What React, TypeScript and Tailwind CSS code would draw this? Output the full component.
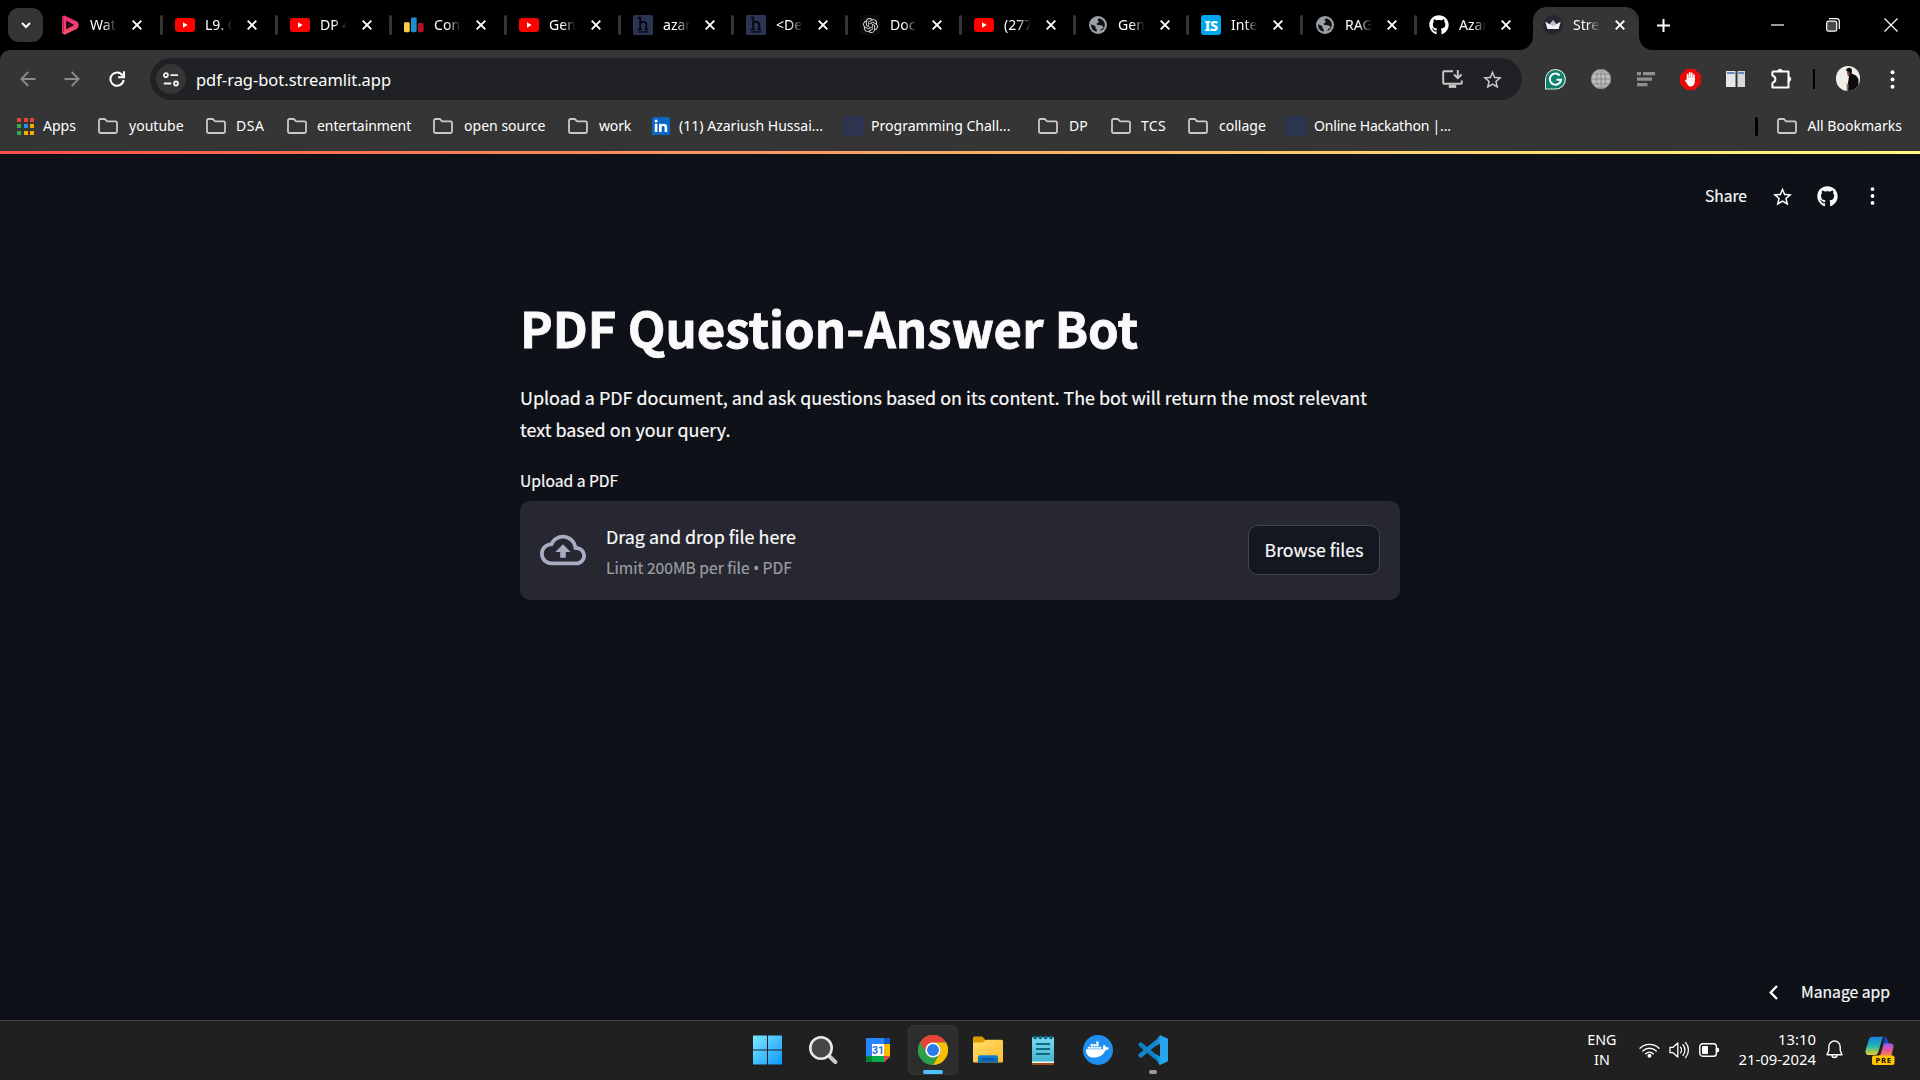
import React from "react";
import { FaGithub, FaDocker } from "react-icons/fa";
import { SiOpenai } from "react-icons/si";

/* ---------- Tab icons ---------- */

const YouTube = () => (
  <svg width="20" height="14" viewBox="0 0 20 14">
    <rect width="20" height="14" rx="3" fill="#ff0000" />
    <path d="M8 4.2v5.6L12.6 7z" fill="#fff" />
  </svg>
);

const Clipchamp = () => (
  <svg width="20" height="20" viewBox="0 0 20 20">
    <defs>
      <linearGradient id="dg" x1="0" y1="0" x2="0" y2="1">
        <stop offset="0" stopColor="#f0297c" />
        <stop offset="1" stopColor="#f9546a" />
      </linearGradient>
    </defs>
    <path d="M4 .3 16.500 6.200q2 1 2 3v1.800q0 2-2 3L4.500 19.800 2 18V2z" fill="url(#dg)" />
    <path d="M6.300 5.800 14 10 6.300 14.200z" fill="#000" />
    <path d="M8.400 8 11.800 10 8.400 12z" fill="#4a0f28" />
    <path d="M3.200 3v14.500" stroke="#a81f55" strokeWidth="1.200" />
  </svg>
);

const Bars = () => (
  <svg width="21" height="16" viewBox="0 0 21 16">
    <rect x="0" y="5" width="6" height="10.500" rx="1.400" fill="#fccf47" />
    <rect x="7.300" y="0" width="6" height="15.500" rx="1.400" fill="#1b8fd2" />
    <rect x="14.600" y="6" width="6" height="9.500" rx="1.400" fill="#b5121f" />
  </svg>
);

const HIcon = ({ dim = false }: { dim?: boolean }) => (
  <svg width="20" height="20" viewBox="0 0 20 20">
    <rect width="20" height="20" rx="1.500" fill="#2c3454" />
    <path d="M4.800 2.600h2.400v11.800M4.800 14.400h4.200M7.200 8.200c2.400-2.200 6-1.900 6 1.400v4.800M11.400 14.400h3.800" fill="none" stroke={dim ? "#323846" : "#050810"} strokeWidth="1.900" />
    <path d="M5.200 16.900h10" stroke={dim ? "#323846" : "#050810"} strokeWidth="1.200" />
  </svg>
);

const OpenAI = () => (
  <span className="flex size-5 items-center justify-center rounded bg-[#0c0c0c]">
    <SiOpenai className="size-[15px] text-[#d8d8d8]" />
  </span>
);

const Globe = () => (
  <svg width="18" height="18" viewBox="0 0 18 18">
    <circle cx="9" cy="9" r="9" fill="#9aa0a6" />
    <path d="M10.200 2.200c-1.800.8-2 2-1 2.800 1.200.8.4 1.700-.6 2-1.200.3-1.500 1.200-.4 1.700 2 .8 5.800.2 6.200 2.300.2 1.800-2.100 1.300-2.600 2.700-.3.900-.8 1.600-1.600 1.700 3-.6 5.600-3.300 5.600-6.400 0-3.300-2.300-6-5.600-6.800z" fill="#111" />
    <path d="M2.100 8.100c1.200 1.300 3.200 1 4 2.100.7 1 .1 2.100 1.200 2.800.8.500.5 1.700.3 2.700C4.300 15.300 1.800 12.300 2.100 8.100z" fill="#111" />
  </svg>
);

const InternIcon = () => (
  <span className="flex size-5 items-center justify-center rounded-[3px] bg-[#00a5ec] font-['Noto_Sans',sans-serif] text-[14.500px] leading-none font-extrabold tracking-[-0.500px] text-white">IS</span>
);

const Streamlit = () => (
  <svg width="20" height="20" viewBox="0 0 20 20">
    <circle cx="10" cy="10" r="10" fill="#262630" />
    <path d="M2.300 6.700 6.800 9.300 10 5.300 13.200 9.300 17.700 6.700 15.600 14H4.400z" fill="#f2f2f4" />
    <path d="M6.800 9.300 10 5.300 13.200 9.300 10 11.200z" fill="#b9bac2" />
  </svg>
);

const Close = () => (
  <svg width="10" height="10" viewBox="0 0 10 10">
    <path d="M.7.7l8.600 8.600M9.300.7.7 9.300" stroke="#fff" strokeWidth="1.900" />
  </svg>
);

const tabs: { icon: React.ReactNode; text: string; w: string }[] = [
  { icon: <Clipchamp />, text: "Wat", w: "w-[115px]" },
  { icon: <YouTube />, text: "L9. C", w: "w-[115px]" },
  { icon: <YouTube />, text: "DP 4", w: "w-[114px]" },
  { icon: <Bars />, text: "Con", w: "w-[115px]" },
  { icon: <YouTube />, text: "Gen", w: "w-[114px]" },
  { icon: <HIcon />, text: "azar", w: "w-[113px]" },
  { icon: <HIcon />, text: "<De", w: "w-[114px]" },
  { icon: <OpenAI />, text: "Doc", w: "w-[114px]" },
  { icon: <YouTube />, text: "(277", w: "w-[114px]" },
  { icon: <Globe />, text: "Gen", w: "w-[113px]" },
  { icon: <InternIcon />, text: "Inte", w: "w-[114px]" },
  { icon: <Globe />, text: "RAG", w: "w-[114px]" },
  { icon: <FaGithub className="size-5 text-white" />, text: "Azar", w: "w-[114px]" },
];

const TabBody = ({ icon, text }: { icon: React.ReactNode; text: string }) => (
  <>
    <span className="flex w-5 shrink-0 items-center justify-center">{icon}</span>
    <span className="ml-[10px] w-[27px] shrink-0 mask-r-from-50% mask-r-to-100% text-[14.050px] leading-5 whitespace-nowrap text-white">{text}</span>
    <span className="ml-[14.500px] flex shrink-0">
      <Close />
    </span>
  </>
);

const TabStrip = () => (
  <div className="flex h-[50px] items-center bg-black">
    <div className="ml-2 flex h-[34px] w-[35px] shrink-0 items-center justify-center rounded-[11px] bg-[#353535]">
      <svg width="10" height="7" viewBox="0 0 10 7"><path d="M1 1l4 4 4-4" fill="none" stroke="#fff" strokeWidth="2" /></svg>
    </div>
    <div className="ml-[2px] flex h-full items-center">
      {tabs.map((t, i) => (
        <div key={i} className={`flex h-full shrink-0 items-center ${t.w}`}>
          <span className={`mr-3 h-5 w-[3px] shrink-0 rounded-full ${i === 0 ? "bg-transparent" : "bg-[#353535]"}`} />
          <TabBody icon={t.icon} text={t.text} />
        </div>
      ))}
    </div>
    <div className="relative ml-[5px] flex h-[43px] w-[106px] shrink-0 items-center self-end rounded-t-[14px] bg-[#353535] pb-[7px] pl-[10px]">
      <svg className="absolute bottom-0 -left-[14px]" width="14" height="14" viewBox="0 0 14 14"><path d="M14 0v14H0A14 14 0 0 0 14 0z" fill="#353535" /></svg>
      <svg className="absolute -right-[14px] bottom-0" width="14" height="14" viewBox="0 0 14 14"><path d="M0 0v14h14A14 14 0 0 1 0 0z" fill="#353535" /></svg>
      <TabBody icon={<Streamlit />} text="Stre" />
    </div>
    <svg className="ml-[18px] shrink-0" width="13" height="13" viewBox="0 0 13 13"><path d="M6.500 0v13M0 6.500h13" stroke="#fff" strokeWidth="2" /></svg>
    <div className="ml-auto flex items-center pr-[22px] text-white">
      <svg width="13" height="13" viewBox="0 0 13 13"><path d="M0 6h13" stroke="#fff" strokeWidth="1.200" /></svg>
      <svg className="ml-[42px]" width="14" height="14" viewBox="0 0 14 14" fill="none" stroke="#fff" strokeWidth="1.200">
        <rect x=".7" y="3.200" width="10" height="10" rx="1.800" fill="#4a4a4a" />
        <path d="M3 .7h7.500A2.800 2.800 0 0 1 13.300 3.500V11" />
      </svg>
      <svg className="ml-[44px]" width="14" height="14" viewBox="0 0 14 14"><path d="M.5.5l13 13M13.500.5l-13 13" stroke="#fff" strokeWidth="1.200" /></svg>
    </div>
  </div>
);

/* ---------- Toolbar ---------- */

const ArrowLeft = ({ flip = false }: { flip?: boolean }) => (
  <svg className={flip ? "rotate-180" : ""} width="16" height="16" viewBox="0 0 16 16" fill="none" stroke="#8a8a8a" strokeWidth="1.800">
    <path d="M15.500 8H1.500M8.300 1 1.300 8l7 7" />
  </svg>
);

const Star = ({ color, w }: { color: string; w: number }) => (
  <svg width={w} height={w} viewBox="2 2 20 19" fill={color}>
    <path d="M22 9.240l-7.190-.62L12 2 9.190 8.630 2 9.240l5.460 4.730L5.820 21 12 17.270 18.180 21l-1.630-7.030L22 9.240zM12 15.400l-3.760 2.270 1-4.280-3.320-2.880 4.380-.38L12 6.100l1.710 4.040 4.380.38-3.320 2.880 1 4.280L12 15.400z" />
  </svg>
);

const Dots = ({ h = 19 }: { h?: number }) => (
  <svg width="5" height={h} viewBox="0 0 5 19" fill="#fff">
    <circle cx="2.500" cy="2.200" r="2" /><circle cx="2.500" cy="9.500" r="2" /><circle cx="2.500" cy="16.800" r="2" />
  </svg>
);

const extensions = [
  <svg key="g" width="21" height="21" viewBox="0 0 21 21">
    <path d="M0 20.500V10.500A10.500 10.200 0 1 1 10.500 20.500z" fill="#d9e5e2" />
    <path d="M1 19.500V10.300A9.400 9.300 0 1 1 10.500 19.500z" fill="#0a8168" />
    <path d="M14.700 6.500A5.600 5.600 0 1 0 16 10.800h-4.500" fill="none" stroke="#fff" strokeWidth="2" />
  </svg>,
  <svg key="w" width="20" height="20" viewBox="0 0 20 20" fill="none" stroke="#858585" strokeWidth=".9">
    <circle cx="10" cy="10" r="9.700" fill="#bdbdbd" stroke="#9a9a9a" />
    <ellipse cx="10" cy="10" rx="4.600" ry="9.500" />
    <path d="M10 .5v19M.5 10h19M2.200 5h15.600M2.200 15h15.600" />
  </svg>,
  <svg key="l" width="18" height="15" viewBox="0 0 18 15" fill="#8f8f8f">
    <path d="M0 0h4v3.200H0zM6 0h12v3.200H6zM0 5.500h15v3.200H0zM0 11h10.500v3.200H0z" />
  </svg>,
  <svg key="h" width="21" height="21" viewBox="0 0 21 21">
    <path d="M6.200 0h8.600L21 6.200v8.600L14.800 21H6.200L0 14.800V6.200z" fill="#ea0a0a" />
    <path d="M7.600 11V5.600M9.700 10V3.900M11.800 10V4.300M13.900 11V6" stroke="#fff" strokeWidth="1.700" strokeLinecap="round" />
    <path d="M6.800 9h7.900v3.800c0 2.600-1.400 4.700-3.600 4.700-2 0-3-1-3.900-2.600L5 11.400c.4-1 1.300-.9 1.800-.2z" fill="#fff" />
  </svg>,
  <svg key="c" width="19" height="16" viewBox="0 0 19 16">
    <rect width="9.500" height="16" fill="#e6e6e6" /><rect x="11.500" width="7.500" height="16" fill="#d8d8d8" />
    <rect x="1" y="1.200" width="7.500" height="1.600" fill="#4672b8" /><rect x="12.300" y="1.200" width="5.900" height="1.600" fill="#4672b8" />
  </svg>,
  <svg key="p" className="ml-[2px] -mt-[1px]" width="21" height="21" viewBox="0 0 21 21" fill="none" stroke="#fff" strokeWidth="2" strokeLinejoin="round">
    <path d="M1.200 3.500h5.600M11.200 3.500h6.300v5.200M17.500 13.300v6.100H1.400v-5M1.400 3.500v4.600" />
    <path d="M1.400 8.100c4 .2 4 6 0 6.300M6.600 3.500h5M17.500 8v6" />
    <path d="M6.600 3.500C6.800.6 11.200.6 11.400 3.500zM17.500 8.600c3 .2 3 4.700 0 4.900z" fill="#fff" strokeWidth="1" />
  </svg>,
];

const Toolbar = () => (
  <div className="bg-black">
    <div className="flex h-[58px] items-center rounded-t-[10px] bg-[#353535]">
      <span className="ml-5 flex"><ArrowLeft /></span>
      <span className="ml-[28px] flex"><ArrowLeft flip /></span>
      <svg className="ml-[29px]" width="16" height="16" viewBox="0 0 16 16" fill="none" stroke="#fff" strokeWidth="2">
        <path d="M13.600 4.600A6.600 6.600 0 1 0 14.600 9" /><path d="M15 .3v5.900H9.100" />
      </svg>
      <div className="ml-[25px] flex h-[42px] w-[1372px] items-center rounded-full bg-[#202124] pr-[20px] pl-[6px]">
        <span className="flex size-[30px] items-center justify-center rounded-full bg-[#353535]">
          <svg width="16" height="15" viewBox="0 0 16 15" fill="none" stroke="#f1f1f1" strokeWidth="1.800">
            <circle cx="2.900" cy="3.200" r="2" /><path d="M7.500 3.200H15M.8 11.500h7.500" /><circle cx="13" cy="11.500" r="2" />
          </svg>
        </span>
        <span className="mt-px ml-[10px] text-[16.450px] leading-6 text-white">pdf-rag-bot.streamlit.app</span>
        <svg className="ml-auto" width="21" height="18" viewBox="0 0 21 18" fill="none" stroke="#c7c7c7" strokeWidth="1.900">
          <path d="M11 1.200H2.200a1 1 0 0 0-1 1v10.600a1 1 0 0 0 1 1h16.600a1 1 0 0 0 1-1V10.500" />
          <path d="M15.800 0v7.500M12 4.500l3.800 3.700 3.800-3.700" /><path d="M6.800 16.400h7.400" strokeWidth="3" />
        </svg>
        <span className="ml-5 flex"><Star color="#c7c7c7" w={19} /></span>
      </div>
      <div className="ml-[11px] flex">
        {extensions.map((e, i) => (
          <span key={i} className="flex h-6 w-[45px] items-center justify-center">{e}</span>
        ))}
      </div>
      <span className="ml-[10px] h-5 w-[2px] bg-black" />
      <svg className="mt-[-2px] ml-[21px] rounded-full" width="24" height="25" viewBox="0 0 24 25">
        <rect width="24" height="25" fill="#f2efea" />
        <path d="M10 4.200C10.500 1 15.500.8 16 4.200l-.4 3.200 4.400 2L22.500 13v12H11.500l.6-8.500.8-5.500-.6-4.500z" fill="#0c0a0a" />
        <path d="M11 5.800l2.500-.2.8 3-1.900 1.500-.9-.8z" fill="#6a4238" />
        <path d="M10.700 17l2 2-.5 6h-1.500z" fill="#8a7466" />
      </svg>
      <span className="ml-[30px] flex"><Dots /></span>
    </div>
  </div>
);

/* ---------- Bookmarks ---------- */

const Folder = () => (
  <svg width="20" height="16" viewBox="0 0 20 16" fill="none" stroke="#c9c9c9" strokeWidth="1.800" strokeLinejoin="round">
    <path d="M1 2.500A1.500 1.500 0 0 1 2.500 1h4.300l2.400 2.300h8.300A1.500 1.500 0 0 1 19 4.800v8.700A1.500 1.500 0 0 1 17.500 15h-15A1.500 1.500 0 0 1 1 13.500z" />
  </svg>
);

const appColors = [
  "bg-[#ea4335]", "bg-[#ea4335]", "bg-[#ea4335]",
  "bg-[#34a853]", "bg-[#2e8cf0]", "bg-[#f9ab00]",
  "bg-[#34a853]", "bg-[#f9ab00]", "bg-[#f9ab00]",
];

const AppsGrid = () => (
  <span className="grid grid-cols-3 gap-[2.500px]">
    {appColors.map((c, i) => <span key={i} className={`size-[4px] ${c}`} />)}
  </span>
);

const LinkedIn = () => (
  <svg width="18" height="18" viewBox="0 0 18 18">
    <rect width="18" height="18" rx="1.500" fill="#0a66c2" />
    <path d="M2.800 6.800h2.600v8.300H2.800zM7 6.800h2.500V8c1.300-2.100 5.700-2 5.700 2.200v4.900h-2.600v-4.400c0-2.300-3-2.200-3 0v4.400H7z" fill="#fff" />
    <circle cx="4.100" cy="4" r="1.500" fill="#fff" />
  </svg>
);

const bookmarks: { icon: React.ReactNode; text: string; w: string; gap: string; tr?: string }[] = [
  { icon: <AppsGrid />, text: "Apps", w: "w-[81px]", gap: "ml-[9px]" },
  { icon: <Folder />, text: "youtube", w: "w-[108px]", gap: "ml-[11px]" },
  { icon: <Folder />, text: "DSA", w: "w-[81px]", gap: "ml-[10px]", tr: "tracking-[0.500px]" },
  { icon: <Folder />, text: "entertainment", w: "w-[146px]", gap: "ml-[10px]", tr: "tracking-[-0.100px]" },
  { icon: <Folder />, text: "open source", w: "w-[135px]", gap: "ml-[11px]" },
  { icon: <Folder />, text: "work", w: "w-[84px]", gap: "ml-[11px]", tr: "tracking-[-0.200px]" },
  { icon: <LinkedIn />, text: "(11) Azariush Hussai...", w: "w-[192px]", gap: "ml-[9px]" },
  { icon: <HIcon dim />, text: "Programming Chall...", w: "w-[194px]", gap: "ml-[7px]" },
  { icon: <Folder />, text: "DP", w: "w-[73px]", gap: "ml-[11px]" },
  { icon: <Folder />, text: "TCS", w: "w-[77px]", gap: "ml-[10px]", tr: "tracking-[0.300px]" },
  { icon: <Folder />, text: "collage", w: "w-[98px]", gap: "ml-[11px]" },
  { icon: <HIcon dim />, text: "Online Hackathon |...", w: "w-[180px]", gap: "ml-[8px]", tr: "tracking-[-0.210px]" },
];

const BookmarksBar = () => (
  <div className="flex h-[43px] items-start bg-[#353535] pl-[17px] text-[14.050px] text-white">
    {bookmarks.map((b, i) => (
      <div key={i} className={`flex h-9 shrink-0 items-center whitespace-nowrap ${b.w}`}>
        {b.icon}
        <span className={`leading-5 ${b.gap} ${b.tr ?? ""}`}>{b.text}</span>
      </div>
    ))}
    <div className="ml-auto flex h-9 items-center pr-[18px]">
      <span className="h-[19px] w-[3px] rounded-full bg-black" />
      <span className="ml-[19px] flex"><Folder /></span>
      <span className="ml-[10px] leading-5">All Bookmarks</span>
    </div>
  </div>
);

/* ---------- Page ---------- */

const Page = () => (
  <main className="flex h-[869px] flex-col bg-[#0e1117] font-['Noto_Sans_CJK_SC','Noto_Sans',sans-serif] text-[#fafafa] [-webkit-text-stroke:0.2px]">
    <div className="h-[3px] shrink-0 bg-gradient-to-r from-[#ff4b4b] to-[#fffd80]" />
    <header className="mt-[26px] flex h-8 shrink-0 items-center justify-end pr-[45px]">
      <span className="-mt-[2px] text-[15.600px] leading-6">Share</span>
      <span className="ml-[26px] flex"><Star color="#fafafa" w={19} /></span>
      <FaGithub className="ml-[25px] size-[21px]" />
      <span className="ml-[32px] flex"><Dots h={18} /></span>
    </header>
    <section className="mx-auto mt-[82px] w-[880px]">
      <h1 className="text-[49.100px] leading-[66px] font-bold [-webkit-text-stroke:0.8px]">PDF Question-Answer Bot</h1>
      <p className="mt-[21px] text-[17.910px] leading-8">
        Upload a PDF document, and ask questions based on its content. The bot will return the most relevant
        <br />
        text based on your query.
      </p>
      <label className="mt-[22px] block text-[15.650px] leading-7">Upload a PDF</label>
      <div className="mt-[6px] flex h-[99px] items-center rounded-[10px] bg-[#262730] px-5">
        <svg className="-mt-[2px]" width="46" height="46" viewBox="0 0 24 24" fill="#a9adc1">
          <path d="M19.350 10.040C18.670 6.590 15.640 4 12 4 9.110 4 6.600 5.640 5.350 8.040 2.340 8.360 0 10.910 0 14c0 3.310 2.690 6 6 6h13c2.760 0 5-2.240 5-5 0-2.640-2.050-4.780-4.650-4.960zM19 18H6c-2.210 0-4-1.790-4-4 0-2.050 1.530-3.760 3.560-3.970l1.070-.11.5-.95C8.080 7.140 9.940 6 12 6c2.620 0 4.880 1.860 5.390 4.430l.3 1.500 1.530.11c1.560.1 2.780 1.410 2.780 2.960 0 1.650-1.350 3-3 3zM8 13h2.550v3h2.900v-3H16l-4-4z" />
        </svg>
        <div className="mt-[2px] ml-5 flex flex-col">
          <span className="text-[17.900px] leading-8">Drag and drop file here</span>
          <span className="text-[15.620px] leading-[30px] text-[#9c9da2]">
            Limit 200MB per file <span className="font-['Noto_Sans',sans-serif]">•</span> PDF
          </span>
        </div>
        <button className="-mt-[2px] ml-auto flex h-[50px] w-[132px] items-center justify-center rounded-[10px] border border-[#41444c] bg-[#131720] pb-[2px] text-[17.700px] leading-8">Browse files</button>
      </div>
    </section>
    <footer className="mt-auto flex h-14 items-center justify-end pr-[30px]">
      <svg width="9" height="15" viewBox="0 0 9 15"><path d="M8 1 1.700 7.500 8 14" fill="none" stroke="#fff" strokeWidth="2.400" /></svg>
      <span className="ml-[23px] text-[15.700px] leading-6">Manage app</span>
    </footer>
  </main>
);

/* ---------- Taskbar ---------- */

const WindowsLogo = () => (
  <svg width="30" height="30" viewBox="0 0 30 30">
    <defs>
      <linearGradient id="win" gradientUnits="userSpaceOnUse" x1="0" y1="0" x2="30" y2="30">
        <stop offset="0" stopColor="#7feaff" /><stop offset="1" stopColor="#0a94ff" />
      </linearGradient>
    </defs>
    <path d="M0 .5h14v14H0zM15 .5h14v14H15zM0 15.500h14v14H0zM15 15.500h14v14H15z" fill="url(#win)" />
  </svg>
);

const SearchIcon = () => (
  <svg width="30" height="30" viewBox="0 0 30 30">
    <path d="M19.500 19.500 27.300 27" stroke="#c9cbd0" strokeWidth="4" strokeLinecap="round" />
    <circle cx="13" cy="13" r="10.700" fill="#454749" stroke="#e6e8ea" strokeWidth="2.600" />
  </svg>
);

const Calendar = () => (
  <svg width="24" height="24" viewBox="0 0 24 24">
    <rect width="24" height="24" rx="1.500" fill="#fff" />
    <path d="M1.500 0H18v6H6v12H0V1.500A1.500 1.500 0 0 1 1.500 0z" fill="#2684fc" />
    <path d="M18 0h4.500A1.500 1.500 0 0 1 24 1.500V6h-6z" fill="#0a5ad0" />
    <path d="M18 6h6v12h-6z" fill="#ffba00" />
    <path d="M6 18h12v6H6z" fill="#00ac47" /><path d="M0 18h6v6H1.500A1.500 1.500 0 0 1 0 22.500z" fill="#00832d" />
    <path d="M18 18h6l-6 6z" fill="#e84435" /><path d="M24 18.200V24h-5.800z" fill="#202020" />
    <text x="12" y="16" textAnchor="middle" fontSize="10.500" fontWeight="700" fontFamily="Roboto, sans-serif" fill="#2a6fe0">31</text>
  </svg>
);

const Chrome = () => (
  <svg width="30" height="30" viewBox="0 0 30 30">
    <circle cx="15" cy="15" r="15" fill="#34a853" />
    <path d="M2 7.500A15 15 0 0 1 28 7.500H15A7.500 7.500 0 0 0 8.500 18.750z" fill="#ea4335" />
    <path d="M28 7.500A15 15 0 0 1 15 30l6.500-11.250A7.500 7.500 0 0 0 15 7.500z" fill="#fbbc04" />
    <path d="M2 7.500 8.500 18.750A7.500 7.500 0 0 0 21.500 18.750L15 30A15 15 0 0 1 2 7.500z" fill="#2c9f4b" />
    <circle cx="15" cy="15" r="7.600" fill="#fff" /><circle cx="15" cy="15" r="6" fill="#2b7ce9" />
  </svg>
);

const Explorer = () => (
  <svg width="30" height="27" viewBox="0 0 30 27">
    <defs>
      <linearGradient id="fold" x1="0" y1="0" x2="1" y2="1"><stop offset="0" stopColor="#ffdc6b" /><stop offset="1" stopColor="#fdbe2c" /></linearGradient>
      <linearGradient id="fb" x1="0" y1="0" x2="0" y2="1"><stop offset="0" stopColor="#0c86da" /><stop offset="1" stopColor="#0b62b4" /></linearGradient>
    </defs>
    <path d="M0 2a1.500 1.500 0 0 1 1.500-1.500h7.800L13 4.500V8H0z" fill="#dd9b05" />
    <path d="M0 6.500h9.500L13 3.800h15.500A1.500 1.500 0 0 1 30 5.300v20.200a1 1 0 0 1-1 1H1a1 1 0 0 1-1-1z" fill="url(#fold)" />
    <path d="M5 26.500v-5.500a1.800 1.800 0 0 1 1.800-1.800h16.400A1.800 1.800 0 0 1 25 21v5.500z" fill="url(#fb)" />
    <path d="M8.500 23h13" stroke="#0a4a86" strokeWidth="1.300" />
  </svg>
);

const Notepad = () => (
  <svg width="22" height="30" viewBox="0 0 22 30">
    <defs><linearGradient id="np" x1="0" y1="0" x2="0" y2="1"><stop offset="0" stopColor="#7cdcee" /><stop offset="1" stopColor="#45b4cf" /></linearGradient></defs>
    <path d="M0 26h22v3a1 1 0 0 1-1 1H1a1 1 0 0 1-1-1z" fill="#9a4a12" />
    <path d="M0 25h22v3H0z" fill="#f0f0f0" />
    <rect y="2" width="22" height="24.500" rx="1" fill="url(#np)" />
    <g fill="#0d6a86"><circle cx="3.200" cy="2.400" r="1.900" /><circle cx="8.400" cy="2.400" r="1.900" /><circle cx="13.600" cy="2.400" r="1.900" /><circle cx="18.800" cy="2.400" r="1.900" /></g>
    <path d="M4 9h14M4 14h14M4 19h14" stroke="#0d6a86" strokeWidth="1.800" />
  </svg>
);

const Docker = () => (
  <span className="flex size-[30px] items-center justify-center rounded-full bg-[#1d90ed]">
    <FaDocker className="size-[23px] text-white" />
  </span>
);

const VSCode = () => (
  <svg width="30" height="30" viewBox="0 0 30 30">
    <path d="M2.800 9.700 22.500 26" stroke="#0f7fc4" strokeWidth="4.600" strokeLinecap="round" />
    <path d="M2.800 20.300 22.500 4" stroke="#1285cd" strokeWidth="4.600" strokeLinecap="round" />
    <path d="M22 0 30 3.700v22.600L22 30l-1.600-1.600L22 22z" fill="#27a6f0" />
    <path d="M20.300 2.200 22.300 0v8.200L18 11zM20.300 27.800l2 2.200v-8.200L18 19z" fill="#1b96df" />
  </svg>
);

const taskIcons: { icon: React.ReactNode; active?: boolean; running?: boolean }[] = [
  { icon: <WindowsLogo /> },
  { icon: <SearchIcon /> },
  { icon: <Calendar /> },
  { icon: <Chrome />, active: true },
  { icon: <Explorer /> },
  { icon: <Notepad /> },
  { icon: <Docker /> },
  { icon: <VSCode />, running: true },
];

const Copilot = () => (
  <svg width="30" height="30" viewBox="0 0 30 30">
    <defs>
      <linearGradient id="c1" x1="0" y1="0" x2="0" y2="1"><stop offset="0" stopColor="#1b7fe0" /><stop offset=".5" stopColor="#21b5b0" /><stop offset="1" stopColor="#e8d02c" /></linearGradient>
      <linearGradient id="c2" x1="0" y1="0" x2="0" y2="1"><stop offset="0" stopColor="#9a5cf5" /><stop offset=".5" stopColor="#e0559a" /><stop offset="1" stopColor="#f98a4a" /></linearGradient>
    </defs>
    <path d="M20 1c1.500 0 2.300 1.500 2.800 3.300L24 8h-6z" fill="#1749b8" />
    <path d="M7.500 0.800H20c-2 0-2.800 1.800-3.300 3.500L13.500 15.500c-.7 2.400-2 3.500-4.500 3.500H4c-3 0-4-2.300-3.200-5.300L3.600 4.200C4.300 2 5.400.8 7.500.8z" fill="url(#c1)" />
    <path d="M18.800 7.500h6.500c3 0 3.700 2.200 3 4.800l-2 7.700H13c2 0 2.600-1.700 3.100-3.300z" fill="url(#c2)" />
    <rect x="7" y="19.500" width="22.500" height="9.500" rx="2" fill="#ffc400" />
    <text x="18.500" y="27" textAnchor="middle" fontSize="7.600" fontWeight="800" letterSpacing=".7" fontFamily="Noto Sans, sans-serif" fill="#1a1400">PRE</text>
  </svg>
);

const Taskbar = () => (
  <div className="relative flex h-[60px] items-center justify-end border-t border-[#484848] bg-[#202020] text-white">
    <div className="absolute inset-y-0 left-[740px] flex items-center pb-[2px]">
      {taskIcons.map((t, i) => (
        <div key={i} className="flex w-[55px] justify-center">
          <div className={`relative flex h-[50px] w-[50px] items-center justify-center rounded-md ${t.active ? "border border-[#363636] bg-[#2d2d2d]" : ""}`}>
            {t.icon}
            {t.active && <span className="absolute bottom-0 h-1 w-5 rounded-full bg-[#4cc2ff]" />}
            {t.running && <span className="absolute bottom-px h-1 w-2 rounded-full bg-[#9a9a9a]" />}
          </div>
        </div>
      ))}
    </div>
    <div className="flex items-center pb-[2px] text-[14.300px] leading-5">
      <div className="text-center">ENG<br />IN</div>
      <svg className="ml-[22px]" width="21" height="16" viewBox="0 0 21 16" fill="none" stroke="#fff" strokeWidth="1.400" strokeLinecap="round">
        <path d="M1 6.200a13.600 13.600 0 0 1 19 0M3.800 9a9.700 9.700 0 0 1 13.400 0M6.700 11.700a5.600 5.600 0 0 1 7.600 0" /><circle cx="10.500" cy="13.800" r="1.300" fill="#fff" />
      </svg>
      <svg className="ml-[9px]" width="21" height="18" viewBox="0 0 21 18" fill="none" stroke="#fff" strokeWidth="1.300" strokeLinejoin="round" strokeLinecap="round">
        <path d="M1 6.300h3L8.800 2v14L4 11.700H1z" /><path d="M11.500 6.200c1.300 1.500 1.300 4.100 0 5.600M14 3.800c2.600 2.900 2.600 7.500 0 10.400M16.500 1.400c3.900 4.300 3.900 10.900 0 15.200" />
      </svg>
      <svg className="ml-[9px]" width="21" height="14" viewBox="0 0 21 14" fill="none" stroke="#fff" strokeWidth="1.400">
        <rect x=".8" y=".8" width="16.600" height="12.400" rx="2.800" /><rect x="3" y="3" width="6" height="8" rx=".8" fill="#fff" stroke="none" /><path d="M17.500 5.500h1a1 1 0 0 1 1 1v1a1 1 0 0 1-1 1h-1z" fill="#fff" />
      </svg>
      <div className="-mt-[2px] ml-[19px] text-right text-[14.850px]">13:10<br />21-09-2024</div>
      <svg className="ml-[10px]" width="17" height="19" viewBox="0 0 17 19" fill="none" stroke="#fff" strokeWidth="1.400" strokeLinejoin="round">
        <path d="M8.500 1a5.700 5.700 0 0 0-5.700 5.700v3.800L1 14.700h15l-1.800-4.200V6.700A5.700 5.700 0 0 0 8.500 1zM6 15a2.500 2.500 0 0 0 5 0" />
      </svg>
      <span className="mt-[2px] mr-[25px] ml-[22px] flex"><Copilot /></span>
    </div>
  </div>
);

export default function App() {
  return (
    <div className="flex h-[1080px] w-[1920px] flex-col overflow-hidden bg-black font-['Noto_Sans',sans-serif]">
      <TabStrip />
      <Toolbar />
      <BookmarksBar />
      <Page />
      <Taskbar />
    </div>
  );
}
